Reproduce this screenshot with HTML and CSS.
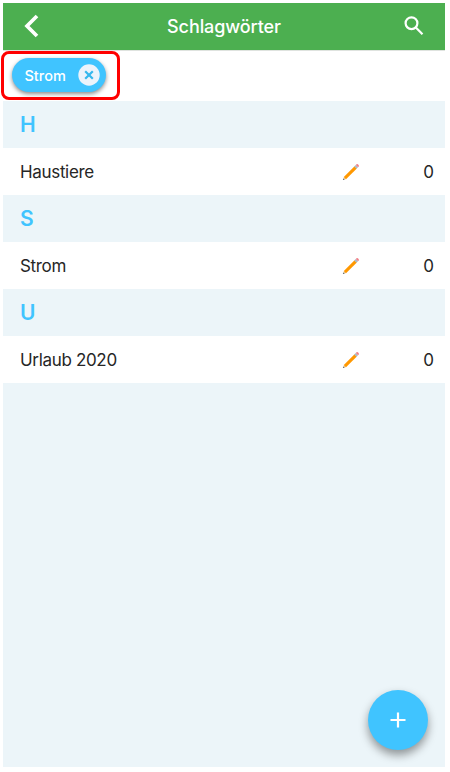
FILE: index.html
```html
<!DOCTYPE html>
<html lang="de">
<head>
<meta charset="utf-8">
<title>Schlagwörter</title>
<link rel="stylesheet" href="styles.css">
</head>
<body>
<main class="screen">
  <header class="topbar">
    <svg class="icon-back" viewBox="0 0 16 24"><path d="M14 2 4 12l10 10"/></svg>
    <h1 class="title">Schlagwörter</h1>
    <svg class="icon-search" viewBox="0 0 20 20"><circle cx="7.5" cy="7.2" r="5.9"/><path d="m11.8 11.5 6.7 6.7"/></svg>
  </header>
  <div class="chipbar">
    <div class="chip">
      <span class="chip-label">Strom</span>
      <svg class="chip-close" viewBox="0 0 22 22"><circle cx="11" cy="11" r="10.7"/><path d="m7.2 7.2 7.6 7.6m0-7.6-7.6 7.6"/></svg>
    </div>
    <div class="highlight"></div>
  </div>
  <h2 class="letter">H</h2>
  <div class="row">
    <span class="name">Haustiere</span>
    <svg class="pencil" viewBox="0 0 18 18"><path class="wood" d="m1.1 16.9.8-3 2.2 2.2z"/><path class="body" d="M1.8 14 12.6 3.2l2.2 2.2L4 16.2z"/><path class="metal" d="m12.2 3.6 1.6-1.6 2.2 2.2-1.6 1.6z"/><path class="eraser" d="m13.8 2 .8-.8c.9-.8 3 1.3 2.2 2.2l-.8.8z"/><path class="lead" d="m.9 17.1.5-1.7 1.2 1.2z"/></svg>
    <span class="count">0</span>
  </div>
  <h2 class="letter">S</h2>
  <div class="row">
    <span class="name">Strom</span>
    <svg class="pencil" viewBox="0 0 18 18"><path class="wood" d="m1.1 16.9.8-3 2.2 2.2z"/><path class="body" d="M1.8 14 12.6 3.2l2.2 2.2L4 16.2z"/><path class="metal" d="m12.2 3.6 1.6-1.6 2.2 2.2-1.6 1.6z"/><path class="eraser" d="m13.8 2 .8-.8c.9-.8 3 1.3 2.2 2.2l-.8.8z"/><path class="lead" d="m.9 17.1.5-1.7 1.2 1.2z"/></svg>
    <span class="count">0</span>
  </div>
  <h2 class="letter">U</h2>
  <div class="row">
    <span class="name">Urlaub 2020</span>
    <svg class="pencil" viewBox="0 0 18 18"><path class="wood" d="m1.1 16.9.8-3 2.2 2.2z"/><path class="body" d="M1.8 14 12.6 3.2l2.2 2.2L4 16.2z"/><path class="metal" d="m12.2 3.6 1.6-1.6 2.2 2.2-1.6 1.6z"/><path class="eraser" d="m13.8 2 .8-.8c.9-.8 3 1.3 2.2 2.2l-.8.8z"/><path class="lead" d="m.9 17.1.5-1.7 1.2 1.2z"/></svg>
    <span class="count">0</span>
  </div>
  <button class="fab" aria-label="Hinzufügen"><svg viewBox="0 0 16 16"><path d="M8 .5v15M.5 8h15"/></svg></button>
</main>
</body>
</html>
```

FILE: styles.css
```css
* { box-sizing: border-box; }

body {
  margin: 0;
  padding: 3px 5px 5px 3px;
  background: #fff;
  color: #262626;
  font-family: Inter, "Liberation Sans", sans-serif;
}

.screen {
  position: relative;
  height: 764px;
  background: #ecf5f9;
}

.topbar {
  display: flex;
  align-items: center;
  justify-content: space-between;
  height: 47px;
  padding: 0 21px 1px 20px;
  background: #4caf50;
  color: #fff;
}

.icon-back {
  width: 16px;
  height: 24px;
  fill: none;
  stroke: #fff;
  stroke-width: 3.7;
}

.title {
  margin: 0 0 0 5px;
  font-size: 18px;
  font-weight: 500;
  letter-spacing: -0.1px;
}

.icon-search {
  width: 20px;
  height: 20px;
  fill: none;
  stroke: #fff;
  stroke-width: 2.2;
}

.chipbar {
  position: relative;
  height: 51px;
  padding: 7px 8px 0 8.5px;
  border-top: 1px solid #dfe3df;
  background: #fff;
}

.chip {
  display: flex;
  align-items: center;
  justify-content: space-between;
  width: 94px;
  height: 34px;
  padding: 0 6px 0 13px;
  border-radius: 17px;
  background: #40c4ff;
  box-shadow: 0 2px 4px rgba(0, 0, 0, 0.45);
  color: #fff;
  font-size: 14.5px;
  font-weight: 500;
}

.chip-close {
  width: 22px;
  height: 22px;
  fill: #ecf3fb;
}

.chip-close path {
  stroke: #35b7ed;
  stroke-width: 2.2;
}

.highlight {
  position: absolute;
  top: 0;
  left: -2px;
  width: 119px;
  height: 49px;
  border: 3px solid #ff0000;
  border-radius: 8px;
}

.letter {
  height: 47px;
  margin: 0;
  padding-left: 17px;
  color: #40c4ff;
  font-size: 21px;
  font-weight: 600;
  line-height: 47px;
}

.row {
  display: grid;
  grid-template-columns: 1fr 18px 74px;
  align-items: center;
  height: 47px;
  padding: 0 11px 0 17px;
  background: #fff;
  font-size: 17px;
}

.name { letter-spacing: -0.33px; }

.count { text-align: right; }

.pencil {
  width: 18px;
  height: 18px;
}

.wood { fill: #e5c493; }
.body { fill: #ff9800; }
.metal { fill: #a9bcc7; }
.eraser { fill: #f08088; }
.lead { fill: #46535a; }

.fab {
  position: absolute;
  right: 17px;
  bottom: 17px;
  display: grid;
  place-items: center;
  width: 60px;
  height: 60px;
  padding: 0;
  border: 0;
  border-radius: 50%;
  background: #40c4ff;
  box-shadow: 0 5px 10px rgba(0, 0, 0, 0.4);
}

.fab svg {
  width: 16px;
  height: 16px;
  stroke: #fff;
  stroke-width: 2.2;
}
```
